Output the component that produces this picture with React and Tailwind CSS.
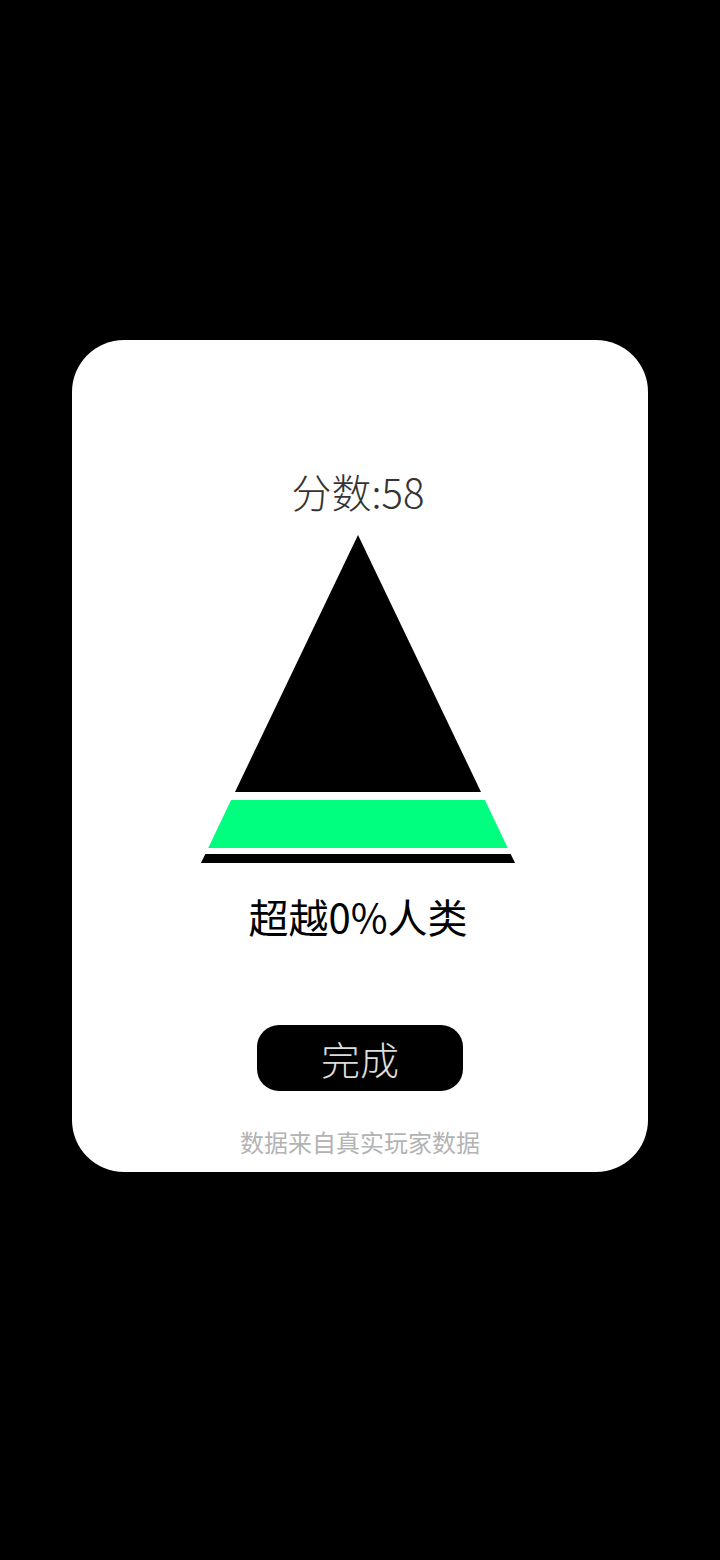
export default function App() {
  return (
    <div
      className="w-[720px] h-[1560px] bg-black pt-[340px] px-[72px]"
      style={{ fontFamily: '"Noto Sans CJK SC", "Noto Sans", sans-serif' }}
    >
      <div className="h-[832px] rounded-[52px] bg-white flex flex-col items-center">
        <div className="mt-[131px] h-[40px] leading-[40px] text-[40px] font-light text-[#333] pr-[4px]">
          分数:58
        </div>
        <svg
          className="mt-[24px] block"
          width="324"
          height="330"
          viewBox="0 0 324 330"
        >
          <polygon points="160,0 283,257 37,257" fill="#000" />
          <polygon points="33.1,265 286.9,265 309.8,313 10.2,313" fill="#00ff7f" />
          <polygon points="7.3,319 312.7,319 317,328 3,328" fill="#000" />
        </svg>
        <div className="mt-[31px] h-[40px] leading-[40px] text-[40px] text-black pr-[4px]">
          超越0%人类
        </div>
        <button className="mt-[89px] w-[206px] h-[66px] rounded-[22px] bg-black text-[39px] font-light text-[#ddd] flex items-center justify-center">
          完成
        </button>
        <div className="mt-[36px] h-[30px] leading-[30px] text-[24px] text-[#b3b3b3]">
          数据来自真实玩家数据
        </div>
      </div>
    </div>
  );
}
